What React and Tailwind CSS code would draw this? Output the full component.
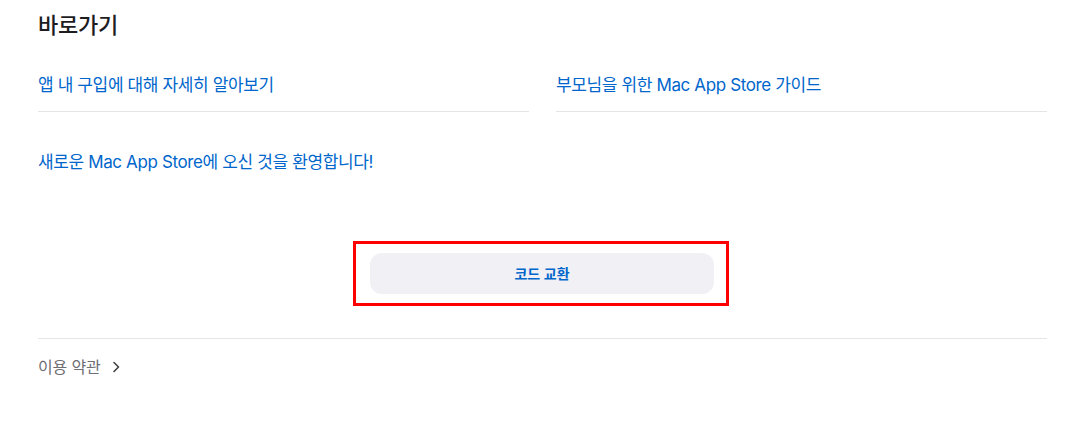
import React from "react";

const font = { fontFamily: '"Inter", "Noto Sans CJK KR", sans-serif' };

export default function App() {
  return (
    <div className="w-[1080px] h-[424px] bg-white overflow-hidden" style={font}>
      <div className="pl-[38px] pr-[33px] pt-[9px]">
        <h2 className="text-[22px] leading-[32px] font-medium text-[#1d1d1f] tracking-[-0.2px]">바로가기</h2>
        <div className="grid grid-cols-2 gap-x-[27px] mt-[32px]">
          <div className="border-b border-[#e5e5e7] h-[39px] flex items-start">
            <a className="text-[17px] leading-[24px] tracking-[-0.022em] text-[#0066cc]">앱 내 구입에 대해 자세히 알아보기</a>
          </div>
          <div className="border-b border-[#e5e5e7] h-[39px] flex items-start">
            <a className="text-[17px] leading-[24px] tracking-[-0.022em] text-[#0066cc]">부모님을 위한 Mac App Store 가이드</a>
          </div>
          <div className="pt-[38px]">
            <a className="text-[17px] leading-[24px] tracking-[-0.022em] text-[#0066cc]">새로운 Mac App Store에 오신 것을 환영합니다!</a>
          </div>
        </div>
      </div>
      <div className="flex justify-center pl-[2px] mt-[67px]">
        <div className="border-[3px] border-[#ff0000] w-[376px] h-[65px] pl-[14px] pr-[12px] pt-[9px]">
          <button className="w-full h-[41px] rounded-[12px] bg-[#f0f0f5] text-[#0066cc] text-[14px] font-semibold">
            코드 교환
          </button>
        </div>
      </div>
      <div className="pl-[38px] pr-[33px]">
        <div className="border-t border-[#e5e5e7] mt-[32px] pt-[16px] flex items-center gap-[10px]">
          <span className="text-[16px] leading-[24px] tracking-[-0.01em] text-[#6e6e73]">이용 약관</span>
          <svg width="10" height="14" viewBox="0 0 10 14" fill="none" stroke="#424245" strokeWidth="1.6" strokeLinecap="round" strokeLinejoin="round">
            <path d="M3 2.5 L7.5 7 L3 11.5" />
          </svg>
        </div>
      </div>
    </div>
  );
}
